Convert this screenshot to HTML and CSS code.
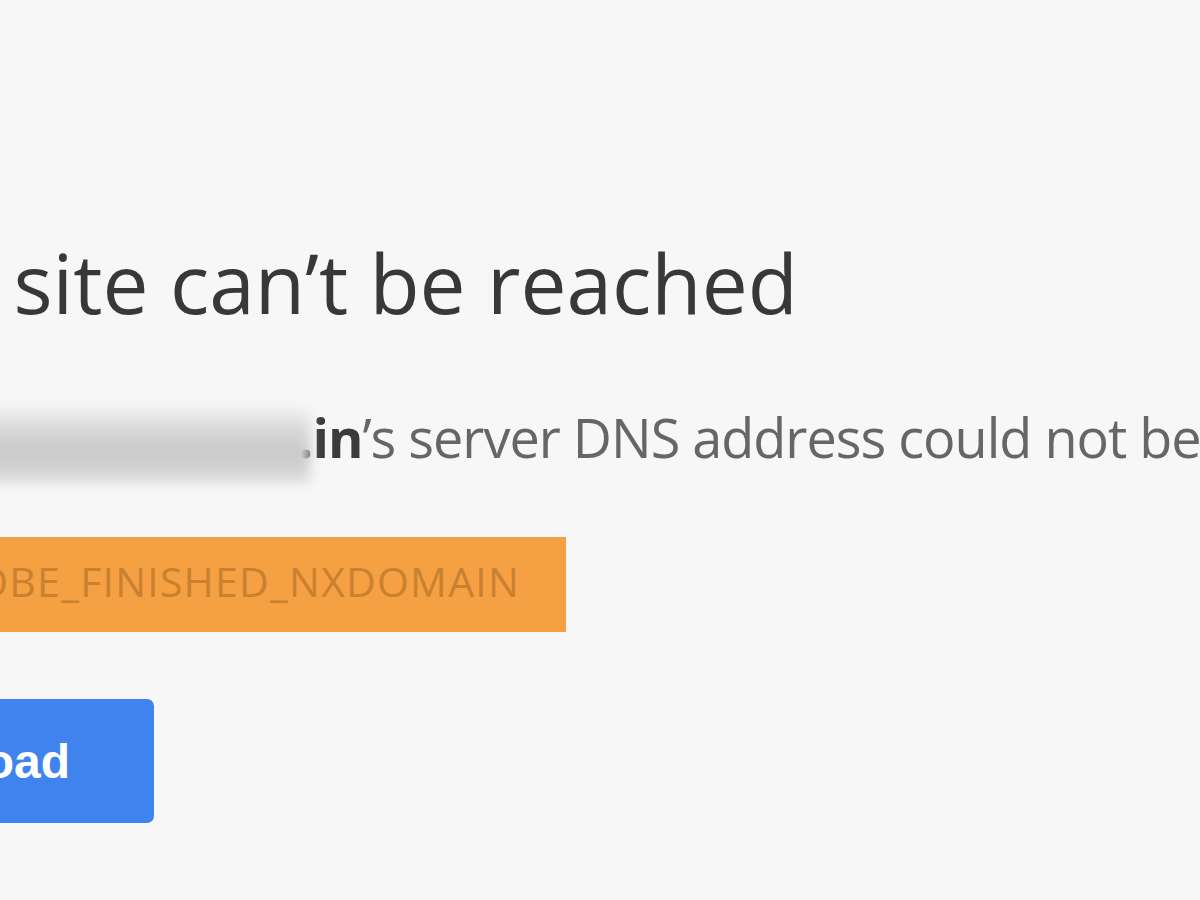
FILE: index.html
```html
<!DOCTYPE html>
<html lang="en">
<head>
<meta charset="utf-8">
<title>This site can't be reached</title>
<link rel="stylesheet" href="styles.css">
</head>
<body>
<main class="page">
  <h1 class="title">This site can’t be reached</h1>
  <p class="summary"><span class="blurred" aria-hidden="true"></span><strong class="domain">.in</strong>’s server DNS address could not be found.</p>
  <div class="code"><span class="code-text">DNS_PROBE_FINISHED_NXDOMAIN</span></div>
  <div class="actions"><button class="reload" type="button">Reload</button></div>
</main>
</body>
</html>
```
FILE: styles.css
```css
html, body {
  margin: 0;
  padding: 0;
  width: 1200px;
  height: 900px;
  overflow: hidden;
  background: #f7f7f7;
}

.page {
  display: flex;
  flex-direction: column;
  align-items: flex-start;
  padding-top: 241px;
  font-family: "Open Sans", "Noto Sans", sans-serif;
  white-space: nowrap;
}

.title {
  margin: 0 0 0 -163px;
  font-size: 82px;
  line-height: 82px;
  font-weight: 400;
  color: #383838;
  letter-spacing: 0;
}

.summary {
  display: flex;
  align-items: baseline;
  margin: 87px 0 0 0;
  font-size: 54px;
  line-height: 54px;
  color: #666666;
  letter-spacing: -1px;
}

.blurred {
  display: inline-block;
  width: 320px;
  height: 72px;
  margin: 0 -12px 0 -10px;
  align-self: center;
  background: linear-gradient(to bottom, #ececec 0%, #d3d3d3 35%, #c9c9c9 60%, #dadada 100%);
  filter: blur(6px);
}

.domain {
  font-weight: 700;
  color: #3b3b3b;
}

.code {
  display: flex;
  justify-content: flex-end;
  margin: 55px 0 0 -40px;
  width: 606px;
  height: 95px;
  box-sizing: border-box;
  padding-right: 46px;
  background: #f5a043;
  overflow: hidden;
}

.code-text {
  flex: none;
  color: #c98130;
  font-size: 41px;
  line-height: 88px;
  letter-spacing: 1.2px;
}

.actions {
  margin: 67px 0 0 0;
}

.reload {
  display: block;
  margin-left: -174px;
  width: 328px;
  height: 124px;
  border: none;
  border-radius: 7px;
  background: #3f84ee;
  color: #ffffff;
  font-family: "Liberation Sans", Arial, sans-serif;
  font-weight: 700;
  font-size: 48px;
  padding: 0;
}
```
